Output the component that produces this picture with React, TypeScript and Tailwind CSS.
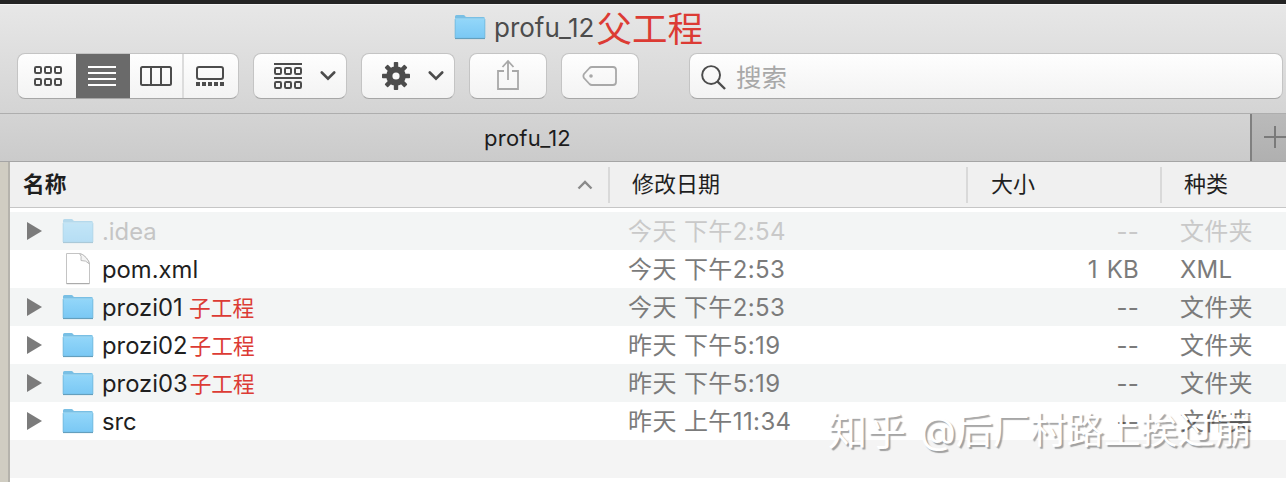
import type { ReactNode } from "react";

const latin = "font-['Inter','Noto_Sans_CJK_SC',sans-serif]";
const button =
  "flex h-[46px] shrink-0 items-center rounded-[8px] border border-[#c4c4c4] border-b-[#a6a6a6] bg-linear-to-b from-[#fefefe] to-[#f3f3f3]";

function Folder({ className = "" }: { className?: string }) {
  return (
    <svg width="32" height="26" viewBox="0 0 32 26" className={`block shrink-0 ${className}`}>
      <defs>
        <linearGradient id="folder" x1="0" y1="0" x2="0" y2="1">
          <stop offset="0" stopColor="#92d6f9" />
          <stop offset="1" stopColor="#7ac8f4" />
        </linearGradient>
      </defs>
      <path d="M1 2.500Q1 1 2.500 1H9.500Q10.500 1 11 2T12.500 3H29.500Q31 3 31 4.500V24H1Z" fill="#79bfe4" />
      <path d="M1.500 5.500H30.500V24H1.500Z" fill="url(#folder)" />
      <path d="M1 5H31" stroke="#a9dff9" strokeWidth="1" />
      <path d="M1 24.500H31" stroke="#649fbd" strokeWidth="1.200" />
      <path d="M1 5V24M31 5V24" stroke="#74b8dc" strokeWidth=".6" />
    </svg>
  );
}

function FileIcon() {
  return (
    <svg width="26" height="34" viewBox="0 0 26 34" className="ml-[3px] block shrink-0">
      <path d="M1.500 1.500H14.500Q18 2 21 5.500Q24.500 9 24.500 12V31.500H1.500Z" fill="#fff" stroke="#c4c4c4" />
      <path d="M14.500 1.500Q17 4 16 8.500Q21 8 24.500 12Q24 9 21 5.500Q18 2 14.500 1.500Z" fill="#f4f4f4" stroke="#bcbcbc" />
      <path d="M1.500 31.700H24.500" stroke="#a5a5a5" />
    </svg>
  );
}

function Chevron() {
  return (
    <svg width="16" height="10" viewBox="0 0 16 10" fill="none" stroke="#4c4c4c" strokeWidth="2.600" strokeLinecap="round">
      <path d="M1.800 1.500L8 7.700L14.200 1.500" />
    </svg>
  );
}

function Cells({ y }: { y: number }) {
  return (
    <>
      <rect x="1" y={y} width="6" height="6" rx="1.200" />
      <rect x="11" y={y} width="6" height="6" rx="1.200" />
      <rect x="21" y={y} width="6" height="6" rx="1.200" />
    </>
  );
}

function Gear() {
  return (
    <svg width="28" height="28" viewBox="-14 -14 28 28" fill="#4c4c4c">
      {[0, 45, 90, 135].map((a) => (
        <rect key={a} x="-2.200" y="-14" width="4.400" height="28" rx=".8" transform={`rotate(${a})`} />
      ))}
      <circle r="9.800" />
      <circle r="3.600" fill="#f8f8f8" />
    </svg>
  );
}

function ViewSwitch() {
  return (
    <div className={`${button} w-[222px] overflow-hidden`}>
      <div className="flex h-full w-[58px] items-center justify-center pl-px">
        <svg width="28" height="20" viewBox="0 0 28 20" fill="none" stroke="#4c4c4c" strokeWidth="2">
          <Cells y={1} />
          <Cells y={13} />
        </svg>
      </div>
      <div className="-my-px flex h-[48px] w-[54px] items-center justify-center bg-[#6a6a6a] pr-0.5">
        <svg width="28" height="20" viewBox="0 0 28 20" stroke="#fff" strokeWidth="2">
          <path d="M0 1H28M0 7H28M0 13H28M0 19H28" />
        </svg>
      </div>
      <div className="flex h-full w-[54px] items-center justify-center border-r-2 border-[#dcdcdc]">
        <svg width="32" height="20" viewBox="0 0 32 20" fill="none" stroke="#4c4c4c" strokeWidth="2">
          <rect x="1" y="1" width="30" height="18" rx="1.500" />
          <path d="M11 1V19M21 1V19" />
        </svg>
      </div>
      <div className="flex h-full flex-1 items-center justify-center pr-0.5">
        <svg width="28" height="20" viewBox="0 0 28 20" fill="none" stroke="#4c4c4c" strokeWidth="2">
          <rect x="1" y="1" width="26" height="12" rx="2" />
          <path d="M0 18H28" strokeWidth="4" strokeDasharray="4 2" />
        </svg>
      </div>
    </div>
  );
}

function Toolbar() {
  return (
    <div className="flex h-[46px] items-start pl-[17px]">
      <ViewSwitch />
      <div className={`${button} ml-[14px] w-[94px] gap-[18px] pl-[20px]`}>
        <svg width="28" height="28" viewBox="0 0 28 28" fill="none" stroke="#4c4c4c" strokeWidth="2" className="mt-0.5">
          <path d="M0 1H28M0 15H28" />
          <Cells y={5} />
          <Cells y={19} />
        </svg>
        <Chevron />
      </div>
      <div className={`${button} ml-[14px] w-[94px] gap-[18px] pl-[20px]`}>
        <Gear />
        <Chevron />
      </div>
      <div className={`${button} ml-[14px] w-[78px] justify-center`}>
        <svg width="24" height="32" viewBox="0 0 24 32" fill="none" stroke="#a8a8a8" strokeWidth="1.800" className="-mt-0.5">
          <path d="M8 12H2V30H22V12H16" />
          <path d="M12 21V2M6.500 8L12 2L17.500 8" />
        </svg>
      </div>
      <div className={`${button} ml-[14px] w-[78px] justify-center`}>
        <svg width="36" height="22" viewBox="0 0 36 22" fill="none" stroke="#a8a8a8" strokeWidth="1.800">
          <path d="M10 2H31Q34 2 34 5V17Q34 20 31 20H10Q8.500 20 7.500 19L2 13Q.8 11 2 9L7.500 3Q8.500 2 10 2Z" />
          <circle cx="9" cy="11" r="1.800" fill="#a8a8a8" stroke="none" />
        </svg>
      </div>
      <div className={`${button} ml-[50px] w-[594px] pl-[11px]`}>
        <svg width="25" height="25" viewBox="0 0 26 26" fill="none" stroke="#4c4c4c" strokeWidth="2" className="mt-0.5">
          <circle cx="10.500" cy="10.500" r="9.300" />
          <path d="M17 17L25 25" strokeWidth="2.400" />
        </svg>
        <span className="mt-[3px] ml-[10px] text-[25.5px] leading-none text-[#a8a8a8]">搜索</span>
      </div>
    </div>
  );
}

type Entry = {
  name: string;
  note?: string;
  date: string;
  size: string;
  kind: string;
  file?: boolean;
  dim?: boolean;
};

const entries: Entry[] = [
  { name: ".idea", date: "今天 下午2:54", size: "--", kind: "文件夹", dim: true },
  { name: "pom.xml", date: "今天 下午2:53", size: "1 KB", kind: "XML", file: true },
  { name: "prozi01", note: "子工程", date: "今天 下午2:53", size: "--", kind: "文件夹" },
  { name: "prozi02", note: "子工程", date: "昨天 下午5:19", size: "--", kind: "文件夹" },
  { name: "prozi03", note: "子工程", date: "昨天 下午5:19", size: "--", kind: "文件夹" },
  { name: "src", date: "昨天 上午11:34", size: "--", kind: "文件夹" },
];

function Row({ entry }: { entry: Entry }) {
  const meta = entry.dim ? "text-[#c9c9c9]" : "text-[#7b7b7b]";
  return (
    <div className="flex h-[38px] items-center text-[24px] leading-[38px] whitespace-nowrap odd:bg-[#f3f5f5]">
      <div className="flex h-[38px] w-[618px] items-center pl-[17px]">
        <div className="w-[35px]">
          {!entry.file && (
            <svg width="15" height="18" viewBox="0 0 15 18" fill="#7b7b7b">
              <path d="M0 0L15 9L0 18Z" />
            </svg>
          )}
        </div>
        <div className="flex w-[40px]">
          {entry.file ? <FileIcon /> : <Folder className={entry.dim ? "-mt-px opacity-50" : "-mt-px"} />}
        </div>
        <span className={`min-w-[85px] pt-0.5 text-[23.8px] ${entry.dim ? "text-[#c5c5c5]" : "text-[#1f1f1f]"}`}>
          {entry.name}
        </span>
        {entry.note && <span className="ml-[2px] pt-0.5 text-[21.7px] text-[#dc3b34]">{entry.note}</span>}
      </div>
      <div className={`w-[350px] pt-0.5 tracking-[0.4px] ${meta}`}>{entry.date}</div>
      <div className={`w-[161px] pt-0.5 text-right tracking-[0.2px] [word-spacing:2px] ${meta}`}>{entry.size}</div>
      <div className={`pt-0.5 pl-[41px] tracking-[0.2px] ${meta}`}>{entry.kind}</div>
    </div>
  );
}

function HeaderCell({ children, className }: { children: ReactNode; className: string }) {
  return <div className={`flex h-[36px] items-center ${className}`}>{children}</div>;
}

export default function App() {
  return (
    <div className={`relative h-[482px] w-[1286px] overflow-hidden bg-white ${latin}`}>
      <div className="h-1 bg-[#232323]" />
      <div className="h-[110px] border-t border-b border-t-[#f4f4f4] border-b-[#aeaeae] bg-linear-to-b from-[#e7e7e7] to-[#d4d4d4]">
        <div className="flex h-[48px] items-center pl-[454px] leading-none whitespace-nowrap">
          <Folder className="-mt-[5px]" />
          <span className="-mt-0.5 ml-2 text-[26px] text-[#4c4c4c]">profu_12</span>
          <span className="mt-0.5 ml-0.5 text-[35.5px] text-[#dc3b34]">父工程</span>
        </div>
        <Toolbar />
      </div>
      <div className="flex h-[48px] border-b border-[#a5a5a5] bg-linear-to-b from-[#d4d4d4] to-[#cbcbcb]">
        <div className="w-[1250px] pl-[484px] text-[22px] leading-[48px] tracking-[0.25px] text-[#1c1c1c]">profu_12</div>
        <div className="flex flex-1 items-center justify-end border-l-2 border-[#808080] bg-linear-to-b from-[#bababa] to-[#b0b0b0]">
          <svg width="22" height="22" viewBox="0 0 22 22" stroke="#7a7a7a" strokeWidth="2" className="-mt-0.5">
            <path d="M0 11H22M11 0V22" />
          </svg>
        </div>
      </div>
      <div className="flex">
        <div className="h-[320px] w-[10px] border-r-2 border-[#b5b3ac] bg-[#d0cdc2]" />
        <div className="w-[1276px]">
          <div className="flex h-[46px] items-center border-b border-[#c6c6c6] bg-[#f0f0f0] text-[22px] text-[#1f1f1f]">
            <HeaderCell className="w-[600px] justify-between border-r-2 border-[#d9d9d9] pr-[15px] pl-[13px] font-bold">
              <span className="text-[21.7px]">名称</span>
              <svg width="16" height="10" viewBox="0 0 16 10" fill="none" stroke="#8a8a8a" strokeWidth="2.400">
                <path d="M1.500 8.500L8 2L14.500 8.500" />
              </svg>
            </HeaderCell>
            <HeaderCell className="w-[358px] border-r-2 border-[#d9d9d9] pl-[22px]">修改日期</HeaderCell>
            <HeaderCell className="w-[194px] border-r-2 border-[#d9d9d9] pl-[23px]">大小</HeaderCell>
            <HeaderCell className="pl-[22px]">种类</HeaderCell>
          </div>
          <div className="h-1" />
          <div>
            {entries.map((entry) => (
              <Row key={entry.name} entry={entry} />
            ))}
            <div className="h-[38px] bg-[#f4f4f4]" />
          </div>
        </div>
      </div>
      <div className="absolute top-[411px] left-[828px] flex gap-[14px] text-[37px] leading-[40px] whitespace-nowrap text-white [text-shadow:2px_2px_1px_rgba(0,0,0,0.35)]">
        <span className="text-[39px]">知乎</span>
        <span>@后厂村路上挨过崩</span>
      </div>
    </div>
  );
}
